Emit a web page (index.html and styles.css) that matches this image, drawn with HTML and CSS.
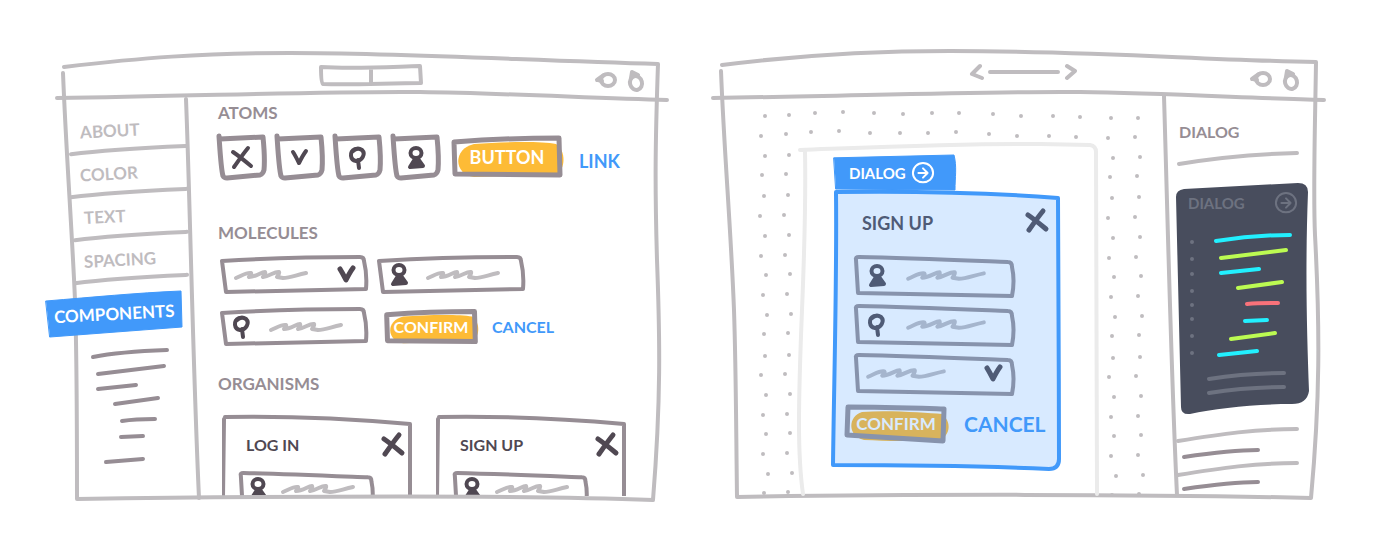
FILE: index.html
```html
<!DOCTYPE html>
<html lang="en">
<head>
  <meta charset="UTF-8">
  <meta name="viewport" content="width=device-width, initial-scale=1">
  <title>Components</title>
  <link rel="stylesheet" href="styles.css">
</head>
<body>
  <!-- shared shapes -->
  <svg class="defs" aria-hidden="true">
    <symbol id="i-close" viewBox="0 0 22 22">
      <path d="M2 5C8 9 14 14 20 19M17 1C12 7 8 13 3 20" />
    </symbol>
    <symbol id="i-check" viewBox="0 0 22 22">
      <path d="M4 5C6 8 8 12 10 16C12 12 14 8 17 4" />
    </symbol>
    <symbol id="i-pin" viewBox="0 0 22 22">
      <path d="M8 2C2 5 3 13 9 14C15 14 19 7 15 3C12 1 9 1 6 4M11 13L12 21" />
    </symbol>
    <symbol id="i-user" viewBox="0 0 22 22">
      <ellipse cx="11" cy="6" rx="5.5" ry="5" />
      <path d="M10 12L5 20L18 19L13 12M8 19L11 15L15 19" />
    </symbol>
    <symbol id="i-go" viewBox="0 0 24 24">
      <path d="M12 1C6 1 1 6 1 12C1 18 6 22 12 22C18 22 23 18 23 12C23 6 18 1 12 1M7 12L17 12M12 7L17 12L12 17" />
    </symbol>
    <symbol id="i-scribble" viewBox="0 0 74 12">
      <path d="M2 9C9 6 13 3 17 4Q18 5 15 8C22 8 27 3 31 3Q32 5 29 8C36 7 41 2 45 3Q46 4 43 8L49 9C56 9 62 6 72 4" />
    </symbol>
    <symbol id="i-circles" viewBox="0 0 50 24">
      <ellipse cx="13" cy="17" rx="7" ry="6" />
      <path d="M2 17L9 12M3 17L7 18" />
      <ellipse cx="41" cy="20" rx="6" ry="7" transform="rotate(-15 41 20)" />
      <path d="M37 9L43 12M37 9L36 15" />
    </symbol>
    <symbol id="o-square" viewBox="0 0 47 44" preserveAspectRatio="none">
      <path d="M1 1C2 16 3 34 5 41Q6 43 9 43L42 40Q45 39 46 35C47 24 46 12 45 2L2 4" />
    </symbol>
    <symbol id="o-field" viewBox="0 0 147 36" preserveAspectRatio="none">
      <path d="M1 4C50 1 100 0 139 0Q143 0 143 4C145 12 146 20 145 32L5 35Z" />
    </symbol>
    <symbol id="o-field-down" viewBox="0 0 160 41" preserveAspectRatio="none">
      <path d="M1 4Q0 1 4 1C50 2 100 4 153 6Q157 6 157 11C159 20 159 30 157 40L3 37Z" />
    </symbol>
    <symbol id="o-button" viewBox="0 0 110 42" preserveAspectRatio="none">
      <path class="blob" d="M22 8C48 6 88 5 104 8C114 14 114 34 104 38L22 41C2 39 0 13 22 8Z" />
      <path d="M2 6C40 3 70 2 107 2L108 39L3 38Z" />
    </symbol>
    <symbol id="o-button-down" viewBox="0 0 100 37" preserveAspectRatio="none">
      <path class="blob" d="M16 7C45 5 80 8 96 9C106 17 104 30 95 34C70 37 40 36 18 35C1 31 2 11 16 7Z" />
      <path d="M2 2C35 2 65 3 98 4L97 36L1 30Z" />
    </symbol>
    <symbol id="o-card" viewBox="0 0 190 82" preserveAspectRatio="none">
      <path d="M3 3C60 2 120 4 188 10L188 84M2 5L1 84" />
    </symbol>
    <symbol id="o-rule" viewBox="0 0 120 12" preserveAspectRatio="none">
      <path d="M1 11C40 5 80 3 119 1" />
    </symbol>
    <path id="dots" d="M65 156h0M62 175h0M64 196h0M60 216h0M65 236h0M61 256h0M66 275h0M63 295h0M67 315h0M64 334h0M65 356h0M61 375h0M66 395h0M63 415h0M66 434h0M63 454h0M68 474h0M64 493h0" />
  </svg>

  <div class="stage">
    <section class="window">
      <svg class="frame" viewBox="0 0 700 552" preserveAspectRatio="none" aria-hidden="true">
        <path d="M64 67C140 58 200 53 290 53C400 53 520 60 658 64C655 150 655 190 657 260C660 340 661 400 653 500C520 495 300 496 77 499C77 420 77 360 75 300C72 230 66 150 63 73" />
        <path d="M57 98C200 96 330 91 420 92C500 93 590 98 667 100" />
        <path d="M186 99C190 200 193 370 199 498" />
      </svg>
      <header class="titlebar">
        <svg class="tabs" viewBox="0 0 104 22" aria-hidden="true">
          <path d="M2 3C35 5 68 3 101 2L102 19C70 19 35 21 4 20Q2 19 2 3M52 4L52 20" />
        </svg>
        <svg class="circles" aria-hidden="true"><use href="#i-circles" /></svg>
      </header>
      <div class="layout">
        <nav class="menu">
          <a class="menu-item" href="#"><span>ABOUT</span><svg class="rule"><use href="#o-rule" /></svg></a>
          <a class="menu-item" href="#"><span>COLOR</span><svg class="rule"><use href="#o-rule" /></svg></a>
          <a class="menu-item indent" href="#"><span>TEXT</span><svg class="rule"><use href="#o-rule" /></svg></a>
          <a class="menu-item indent" href="#"><span>SPACING</span><svg class="rule"><use href="#o-rule" /></svg></a>
          <a class="menu-active" href="#">
            <svg class="outline" viewBox="0 0 138 48" preserveAspectRatio="none"><path d="M1 11C50 7 90 3 136 1L137 37L5 47Z" /></svg>
            <span>COMPONENTS</span>
          </a>
          <svg class="menu-lines" viewBox="0 0 80 122" aria-hidden="true">
            <path d="M3 11C28 6 50 5 77 4M8 28L74 20M8 43L46 39M25 58L68 52M32 75C45 73 55 73 65 73M31 91L53 90M16 116L53 113" />
          </svg>
        </nav>

        <main class="content">
          <h2>ATOMS</h2>
          <div class="row atoms">
            <button class="icon-button" aria-label="Close"><svg class="outline"><use href="#o-square" /></svg><svg class="icon"><use href="#i-close" /></svg></button>
            <button class="icon-button" aria-label="Done"><svg class="outline"><use href="#o-square" /></svg><svg class="icon"><use href="#i-check" /></svg></button>
            <button class="icon-button" aria-label="Key"><svg class="outline"><use href="#o-square" /></svg><svg class="icon"><use href="#i-pin" /></svg></button>
            <button class="icon-button" aria-label="User"><svg class="outline"><use href="#o-square" /></svg><svg class="icon"><use href="#i-user" /></svg></button>
            <button class="button large"><svg class="outline"><use href="#o-button" /></svg><span>BUTTON</span></button>
            <a class="link large" href="#">LINK</a>
          </div>

          <h2>MOLECULES</h2>
          <div class="row molecules">
            <label class="field choice">
              <svg class="outline"><use href="#o-field" /></svg>
              <svg class="scribble"><use href="#i-scribble" /></svg>
              <svg class="icon end"><use href="#i-check" /></svg>
              <select aria-label="Option"><option></option></select>
            </label>
            <label class="field">
              <svg class="outline"><use href="#o-field" /></svg>
              <svg class="icon"><use href="#i-user" /></svg>
              <svg class="scribble"><use href="#i-scribble" /></svg>
              <input type="text" aria-label="User name">
            </label>
          </div>
          <div class="row molecules last">
            <label class="field">
              <svg class="outline"><use href="#o-field" /></svg>
              <svg class="icon"><use href="#i-pin" /></svg>
              <svg class="scribble"><use href="#i-scribble" /></svg>
              <input type="password" aria-label="Password">
            </label>
            <div class="actions">
              <button class="button"><svg class="outline"><use href="#o-button" /></svg><span>CONFIRM</span></button>
              <a class="link" href="#">CANCEL</a>
            </div>
          </div>

          <h2>ORGANISMS</h2>
          <div class="row organisms">
            <article class="card">
              <svg class="outline"><use href="#o-card" /></svg>
              <div class="card-head"><h3>LOG IN</h3><button class="close" aria-label="Close"><svg class="icon"><use href="#i-close" /></svg></button></div>
              <label class="field">
                <svg class="outline"><use href="#o-field-down" /></svg>
                <svg class="icon"><use href="#i-user" /></svg>
                <svg class="scribble"><use href="#i-scribble" /></svg>
                <input type="text" aria-label="User name">
              </label>
            </article>
            <article class="card">
              <svg class="outline"><use href="#o-card" /></svg>
              <div class="card-head"><h3>SIGN UP</h3><button class="close" aria-label="Close"><svg class="icon"><use href="#i-close" /></svg></button></div>
              <label class="field">
                <svg class="outline"><use href="#o-field-down" /></svg>
                <svg class="icon"><use href="#i-user" /></svg>
                <svg class="scribble"><use href="#i-scribble" /></svg>
                <input type="text" aria-label="User name">
              </label>
            </article>
          </div>
        </main>
      </div>
    </section>

    <section class="window editor">
      <svg class="frame" viewBox="0 0 700 552" preserveAspectRatio="none" aria-hidden="true">
        <g class="dots">
          <use href="#dots" />
          <use href="#dots" x="24" y="-1" />
          <use href="#dots" x="348" y="2" />
          <use href="#dots" x="375" y="1" />
          <path d="M65 116h0M89 115h0M115 113h0M143 112h0M174 113h0M203 114h0M232 113h0M259 113h0M293 114h0M321 116h0M353 116h0M380 117h0M411 118h0M438 118h0" />
          <path d="M61 136h0M86 134h0M111 132h0M139 131h0M170 133h0M200 133h0M228 133h0M256 132h0M289 134h0M317 136h0M349 136h0M376 137h0M408 138h0M435 137h0" />
        </g>
        <path d="M22 65C100 55 170 51 250 51C400 51 500 60 616 62C615 130 613 190 615 235C620 330 620 400 611 498C450 494 200 494 37 497C36 420 36 370 34 310C31 230 24 150 21 71" />
        <path d="M13 98C150 96 290 91 380 92C460 93 550 98 624 100" />
        <path d="M464 96C468 230 471 370 477 495" />
      </svg>
      <header class="titlebar">
        <svg class="arrow" viewBox="0 0 108 20" aria-hidden="true">
          <path d="M10 2L2 10L12 14M20 8L88 8M97 2L105 7L97 14" />
        </svg>
        <svg class="circles" aria-hidden="true"><use href="#i-circles" /></svg>
      </header>
      <div class="layout">
        <main class="artboard">
          <svg class="outline page" viewBox="0 0 298 353" preserveAspectRatio="none"><path d="M0 7C80 4 170 0 240 1L290 2Q296 3 296 9L297 351M5 8C7 110 -1 190 -1 280C-1 310 0 330 3 351" /></svg>
          <div class="tag">
            <svg class="outline" viewBox="0 0 122 37" preserveAspectRatio="none"><path d="M0 3L120 0C123 12 121 24 121 37L2 36Z" /></svg>
            <span>DIALOG</span>
            <svg class="icon"><use href="#i-go" /></svg>
          </div>
          <section class="dialog">
            <svg class="outline" viewBox="0 0 228 280" preserveAspectRatio="none"><path d="M4 2C80 1 150 2 226 8C226 80 227 180 227 269Q227 279 217 279C150 276 70 275 1 275C2 190 5 90 4 2Z" /></svg>
            <div class="dialog-head"><h2>SIGN UP</h2><button class="close" aria-label="Close"><svg class="icon"><use href="#i-close" /></svg></button></div>
            <label class="field">
              <svg class="outline"><use href="#o-field-down" /></svg>
              <svg class="icon"><use href="#i-user" /></svg>
              <svg class="scribble"><use href="#i-scribble" /></svg>
              <input type="text" aria-label="User name">
            </label>
            <label class="field">
              <svg class="outline"><use href="#o-field-down" /></svg>
              <svg class="icon"><use href="#i-pin" /></svg>
              <svg class="scribble"><use href="#i-scribble" /></svg>
              <input type="password" aria-label="Password">
            </label>
            <label class="field choice">
              <svg class="outline"><use href="#o-field-down" /></svg>
              <svg class="scribble"><use href="#i-scribble" /></svg>
              <svg class="icon end"><use href="#i-check" /></svg>
              <select aria-label="Option"><option></option></select>
            </label>
            <div class="dialog-actions">
              <button class="button"><svg class="outline"><use href="#o-button-down" /></svg><span>CONFIRM</span></button>
              <a class="link" href="#">CANCEL</a>
            </div>
          </section>
        </main>

        <aside class="inspector">
          <h2>DIALOG</h2>
          <svg class="divider" viewBox="0 0 132 14"><path d="M3 13C45 6 80 3 121 2" /></svg>
          <div class="code">
            <svg class="outline" viewBox="0 0 132 232" preserveAspectRatio="none"><path d="M0 14Q0 7 8 6L122 0Q132 0 132 9C129 90 131 150 133 208Q131 221 116 221C80 221 40 225 14 231Q5 232 5 224Z" /></svg>
            <div class="code-head"><span>DIALOG</span><svg class="icon"><use href="#i-go" /></svg></div>
            <svg class="code-lines" viewBox="0 0 132 166" aria-hidden="true">
              <path class="bullets" d="M16 13h0M16 30h0M16 45h0M16 62h0M16 76h0M16 90h0M16 107h0M16 124h0" />
              <path class="cyan" d="M40 12C65 8 90 6 114 6M45 44L83 40M69 92L91 91M43 126L81 122" />
              <path class="green" d="M45 29L110 21M62 59L106 53M55 110L99 104" />
              <path class="red" d="M71 75C82 74 92 74 102 74" />
              <path class="faint" d="M33 150C58 146 82 144 108 144M33 164C58 160 82 158 108 158" />
            </svg>
          </div>
          <svg class="notes" viewBox="0 0 132 66" aria-hidden="true">
            <path d="M2 15C45 8 80 3 121 3M2 49C45 42 80 37 121 37" />
            <path class="dark" d="M8 31C35 27 60 24 82 24M8 63C35 59 60 56 82 56" />
          </svg>
        </aside>
      </div>
    </section>
  </div>
</body>
</html>
```
FILE: styles.css
```css
* {
  box-sizing: border-box;
}
body {
  --blob: #fdbb36;
  margin: 0;
  background: #fff;
  font-family: Lato, "Open Sans", sans-serif;
  font-weight: 700;
  font-size: 16px;
  line-height: 20px;
  color: #968d94;
}
h2, h3 {
  margin: 0;
  font-size: 17px;
  line-height: 20px;
}
h3 {
  font-size: 16px;
  color: #504852;
}
a {
  text-decoration: none;
}
button, select, input {
  border: none;
  background: none;
  padding: 0;
  font: inherit;
  outline: none;
}
button, select {
  cursor: pointer;
}

/* sketched strokes */
svg {
  display: block;
  flex: none;
  overflow: visible;
  fill: none;
  stroke: #bfbcbf;
  stroke-width: 4px;
  stroke-linecap: round;
  stroke-linejoin: round;
}
symbol {
  overflow: visible;
}
path {
  vector-effect: non-scaling-stroke;
}
.defs {
  position: absolute;
  width: 0;
  height: 0;
}
.outline {
  position: absolute;
  left: 0;
  top: 0;
  width: 100%;
  height: 100%;
  stroke: #968d94;
}
.icon {
  width: 22px;
  height: 22px;
  stroke: #504852;
  stroke-width: 4px;
}
.close .icon {
  stroke-width: 5px;
}
.scribble {
  width: 74px;
  height: 12px;
}

/* windows */
.stage {
  display: grid;
  grid-template-columns: 1fr 1fr;
}
.window {
  position: relative;
  padding: 50px 44px 56px 70px;
}
.editor {
  padding: 50px 84px 56px 29px;
}
.frame {
  position: absolute;
  left: 0;
  top: 0;
  width: 100%;
  height: 100%;
  pointer-events: none;
}
.window:first-child .frame {
  z-index: 1;
}
.titlebar {
  display: grid;
  grid-template-columns: 1fr auto 1fr;
  align-items: center;
  height: 48px;
  padding: 2px 11px 0 27px;
}
.editor .titlebar {
  padding: 0 16px 0 19px;
}
.tabs {
  grid-column: 2;
  width: 104px;
  height: 22px;
}
.arrow {
  grid-column: 2;
  width: 108px;
  height: 20px;
}
.circles {
  justify-self: end;
  width: 50px;
  height: 24px;
}
.layout {
  display: flex;
}

/* side menu */
.menu {
  width: 148px;
  padding-top: 10px;
}
.menu-item {
  position: relative;
  display: block;
  width: 118px;
  height: 43px;
  padding: 13px 0 0 10px;
  font-size: 17px;
  color: #bfbcbf;
}
.menu-item.indent {
  width: 114px;
  margin-left: 4px;
}
.menu-item span, .menu-active span {
  display: inline-block;
  transform: rotate(-3deg);
}
.rule {
  position: absolute;
  left: 0;
  bottom: -4px;
  width: 100%;
  height: 10px;
}
.menu-active {
  position: relative;
  z-index: 2;
  display: flex;
  align-items: center;
  justify-content: center;
  width: 138px;
  height: 48px;
  margin: 10px 0 8px -25px;
  font-size: 17px;
  color: #fff;
}
.menu-active .outline {
  fill: #4199fa;
  stroke: #4199fa;
  stroke-width: 1px;
}
.menu-active span {
  position: relative;
}
.menu-lines {
  width: 80px;
  height: 122px;
  margin-left: 20px;
  stroke: #968d94;
}

/* content */
.content {
  flex: 1;
  padding-top: 5px;
}
.row {
  display: flex;
}
.atoms {
  align-items: center;
  gap: 11px;
  margin: 12px 0 44px;
}
.icon-button {
  position: relative;
  display: flex;
  align-items: center;
  justify-content: center;
  width: 47px;
  height: 44px;
  padding-top: 2px;
}
.icon-button .icon {
  position: relative;
}
.icon-button .outline, .button .outline {
  stroke-width: 5px;
}
.button {
  position: relative;
  width: 92px;
  height: 34px;
  color: #fff;
}
.button.large {
  width: 110px;
  height: 42px;
  margin-left: 2px;
  font-size: 18px;
}
.button span {
  position: relative;
}
.blob {
  fill: var(--blob);
  stroke: none;
}
.link {
  color: #4199fa;
}
.link.large {
  margin-left: 6px;
  padding-top: 8px;
  font-size: 18px;
}
.molecules {
  gap: 10px;
  margin: 14px 0 16px;
}
.molecules.last {
  margin: 0 0 29px;
}
.field {
  position: relative;
  display: flex;
  align-items: center;
  gap: 16px;
  width: 147px;
  height: 36px;
  margin-left: 3px;
  padding: 0 10px;
}
.field.choice {
  padding-left: 13px;
}
.field + .field {
  margin-left: 0;
}
.field .icon, .field .scribble {
  position: relative;
}
.field .icon.end {
  margin-left: auto;
  stroke-width: 5px;
}
.field input, .field select {
  position: absolute;
  left: 0;
  top: 0;
  width: 100%;
  height: 100%;
  appearance: none;
}
.actions {
  display: flex;
  align-items: center;
  gap: 15px;
  padding-left: 7px;
}
.organisms {
  gap: 24px;
  padding-left: 4px;
  margin-top: 20px;
}
.card {
  position: relative;
  width: 190px;
  height: 82px;
  overflow: hidden;
  padding: 18px 8px 0 18px;
}
.card-head, .dialog-head {
  position: relative;
  display: flex;
  align-items: center;
  justify-content: space-between;
}
.card-head {
  height: 26px;
  padding-left: 6px;
}
.card .field {
  gap: 12px;
  width: 134px;
  height: 36px;
  margin: 14px 0 0;
  padding: 0 0 2px 7px;
}

/* artboard */
.artboard {
  position: relative;
  flex: 1;
  max-width: 298px;
  margin: 45px 0 0 71px;
  padding: 12px 0 26px 32px;
}
.artboard .page {
  stroke: #ebebeb;
}
.tag {
  position: relative;
  display: flex;
  align-items: center;
  gap: 6px;
  width: 122px;
  height: 35px;
  margin-left: 2px;
  padding-left: 15px;
  font-size: 15px;
  color: #fff;
}
.tag .outline {
  fill: #4199fa;
  stroke: #4199fa;
  stroke-width: 1px;
}
.tag span, .tag .icon {
  position: relative;
}
.tag .icon {
  stroke: #fff;
  stroke-width: 2px;
}
.dialog {
  --blob: #d8b35c;
  position: relative;
  width: 228px;
  height: 280px;
  padding: 16px 12px 0 24px;
}
.dialog > .outline {
  fill: #d8eaff;
  stroke: #4199fa;
}
.dialog-head {
  height: 30px;
  margin-bottom: 20px;
  padding-left: 6px;
}
.dialog-head h2 {
  padding-top: 4px;
  font-size: 18px;
  color: #4f5b76;
}
.dialog .icon {
  stroke: #4f5b76;
}
.dialog .field {
  gap: 18px;
  width: 160px;
  height: 41px;
  margin: 0 0 8px -1px;
  padding: 0 10px 2px 11px;
}
.dialog .field .outline, .dialog .button .outline {
  stroke: #8793ac;
}
.dialog .scribble {
  width: 80px;
  height: 13px;
  stroke: #a5b5cd;
}
.dialog-actions {
  position: relative;
  display: flex;
  align-items: center;
  gap: 18px;
  margin: 10px 0 0 -10px;
}
.dialog .button {
  width: 100px;
  height: 37px;
  font-size: 17px;
  color: #d8eaff;
}
.dialog .link {
  font-size: 21px;
}

/* inspector */
.inspector {
  width: 140px;
  margin-left: auto;
  padding: 24px 8px 0 0;
}
.inspector h2 {
  padding-left: 3px;
  font-size: 16px;
}
.divider {
  width: 132px;
  height: 14px;
  margin: 9px 0 18px;
}
.code {
  position: relative;
  height: 232px;
  padding-top: 8px;
  font-size: 15px;
  color: #6d7280;
}
.code .outline {
  fill: #484d5d;
  stroke: none;
}
.code-head {
  position: relative;
  display: flex;
  align-items: center;
  justify-content: space-between;
  height: 24px;
  margin-bottom: 14px;
  padding: 0 11px 0 12px;
}
.code-head .icon {
  stroke: #6d7280;
  stroke-width: 2px;
}
.code-lines {
  position: relative;
  width: 132px;
  height: 166px;
}
.bullets, .faint {
  stroke: #6d7280;
}
.cyan {
  stroke: #22f0ff;
}
.green {
  stroke: #bcfb52;
}
.red {
  stroke: #f8727a;
}
.notes {
  width: 132px;
  height: 66px;
  margin-top: 11px;
}
.notes .dark {
  stroke: #968d94;
}
```
